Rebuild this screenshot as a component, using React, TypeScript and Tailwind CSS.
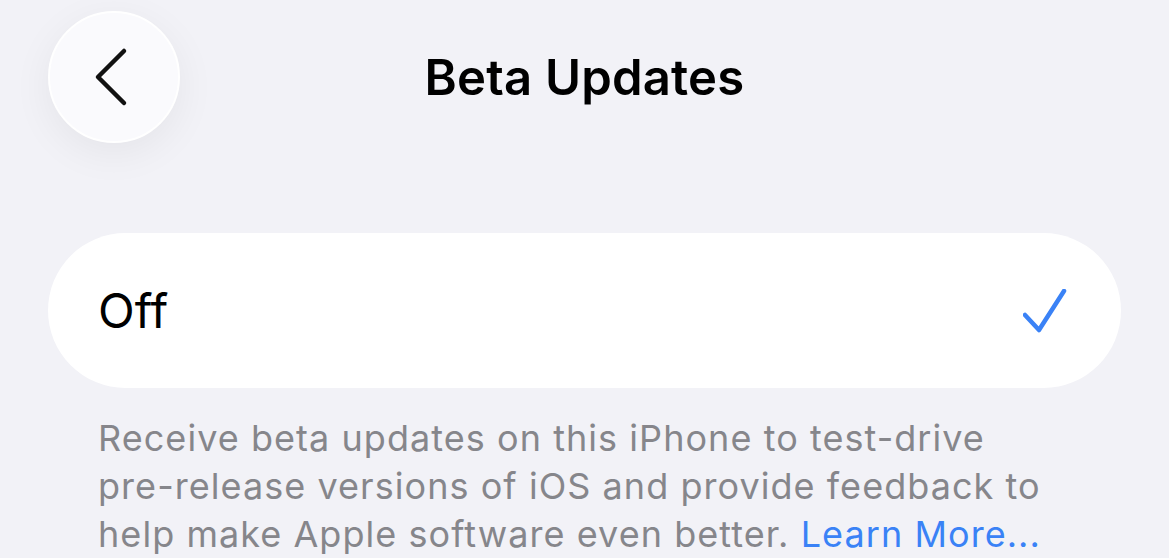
import React from "react";

const App = () => {
  return (
    <div
      className="w-[1169px] h-[558px] overflow-hidden bg-[#f2f2f7] text-black"
      style={{ fontFamily: "Inter, 'Noto Sans', sans-serif" }}
    >
      {/* header */}
      <div className="grid grid-cols-[1fr_auto_1fr] items-center pt-[11px] px-[48px]">
        <div className="flex">
          <button className="flex items-center justify-center w-[132px] h-[132px] rounded-full bg-[#fafafd] border-2 border-white shadow-[0_10px_40px_rgba(0,0,0,0.06)]">
            <svg width="60" height="60" viewBox="0 0 60 60" fill="none">
              <path
                d="M40 4 L14 30 L40 56"
                stroke="#111"
                strokeWidth="4.5"
                strokeLinecap="round"
                strokeLinejoin="round"
              />
            </svg>
          </button>
        </div>
        <h1 className="text-[49px] font-semibold tracking-[0.2px] leading-none">Beta Updates</h1>
        <div />
      </div>

      {/* option card */}
      <div className="mx-[48px] mt-[90px] h-[155px] rounded-full bg-white flex items-center justify-between pl-[50px] pr-[54px]">
        <span className="text-[48px] leading-none">Off</span>
        <svg width="44" height="44" viewBox="0 0 44 44" fill="none">
          <path
            d="M2 26 L16 41 L41 2"
            stroke="#3a82f6"
            strokeWidth="4.5"
            strokeLinecap="round"
            strokeLinejoin="round"
          />
        </svg>
      </div>

      {/* footer */}
      <p className="mx-[98px] mt-[26px] text-[36px] leading-[48px] tracking-[1.05px] text-[#86868b] whitespace-nowrap">
        Receive beta updates on this iPhone to test-drive
        <br />
        pre-release versions of iOS and provide feedback to
        <br />
        help make Apple software even better.{" "}
        <span className="text-[#3a82f6]">Learn More...</span>
      </p>
    </div>
  );
};

export default App;
